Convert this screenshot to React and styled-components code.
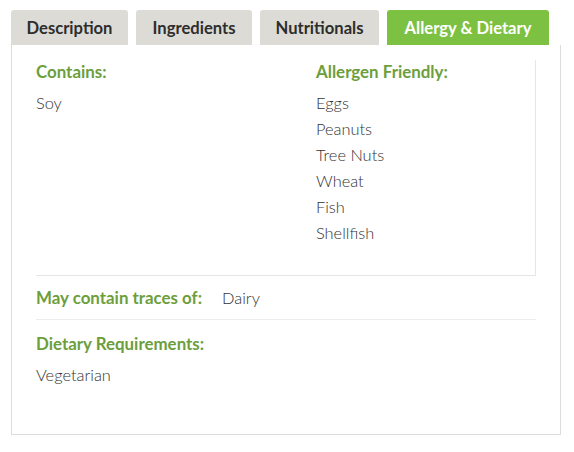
import React from 'react';
import styled, { createGlobalStyle } from 'styled-components';

const GlobalStyle = createGlobalStyle`
  body {
    margin: 0;
    background: #fff;
    font-family: Lato, 'Open Sans', sans-serif;
  }
`;

const Wrapper = styled.div`
  padding: 10px 13px 18px 11px;
  width: 550px;
`;

const TabBar = styled.div`
  display: flex;
  gap: 8px;
  height: 35px;
`;

const Tab = styled.div`
  display: flex;
  align-items: center;
  justify-content: center;
  width: ${(p) => p.w}px;
  border-radius: 3px 3px 0 0;
  background: ${(p) => (p.active ? '#7dc142' : '#dcdbd5')};
  color: ${(p) => (p.active ? '#fff' : '#2d2d2d')};
  font-size: 16.6px;
  font-weight: 700;
`;

const Panel = styled.div`
  border: 1px solid #dddddd;
  border-top: none;
  padding: 15px 24px 46px 24px;
`;

const Columns = styled.div`
  display: grid;
  grid-template-columns: 280px 1fr;
  border-right: 1px solid #e6e6e6;
  border-bottom: 1px solid #e6e6e6;
  padding-bottom: 29px;
`;

const Heading = styled.div`
  color: #6c9e3c;
  font-size: 16.9px;
  font-weight: 700;
  line-height: 24px;
`;

const List = styled.div`
  margin-top: 6px;
  display: flex;
  flex-direction: column;
`;

const Item = styled.div`
  color: #333;
  font-size: 16.4px;
  font-weight: 300;
  line-height: 26px;
`;

const TraceRow = styled.div`
  display: flex;
  align-items: center;
  gap: 20px;
  height: 43px;
  border-bottom: 1px solid #ececec;
`;

const Dietary = styled.div`
  padding-top: 12px;
`;

export default function App() {
  const friendly = ['Eggs', 'Peanuts', 'Tree Nuts', 'Wheat', 'Fish', 'Shellfish'];
  return (
    <>
      <GlobalStyle />
      <Wrapper>
        <TabBar>
          <Tab w={117}>Description</Tab>
          <Tab w={116}>Ingredients</Tab>
          <Tab w={119}>Nutritionals</Tab>
          <Tab w={162} active>Allergy &amp; Dietary</Tab>
        </TabBar>
        <Panel>
          <Columns>
            <div>
              <Heading>Contains:</Heading>
              <List>
                <Item>Soy</Item>
              </List>
            </div>
            <div>
              <Heading>Allergen Friendly:</Heading>
              <List>
                {friendly.map((f) => (
                  <Item key={f}>{f}</Item>
                ))}
              </List>
            </div>
          </Columns>
          <TraceRow>
            <Heading>May contain traces of:</Heading>
            <Item>Dairy</Item>
          </TraceRow>
          <Dietary>
            <Heading>Dietary Requirements:</Heading>
            <List>
              <Item>Vegetarian</Item>
            </List>
          </Dietary>
        </Panel>
      </Wrapper>
    </>
  );
}
